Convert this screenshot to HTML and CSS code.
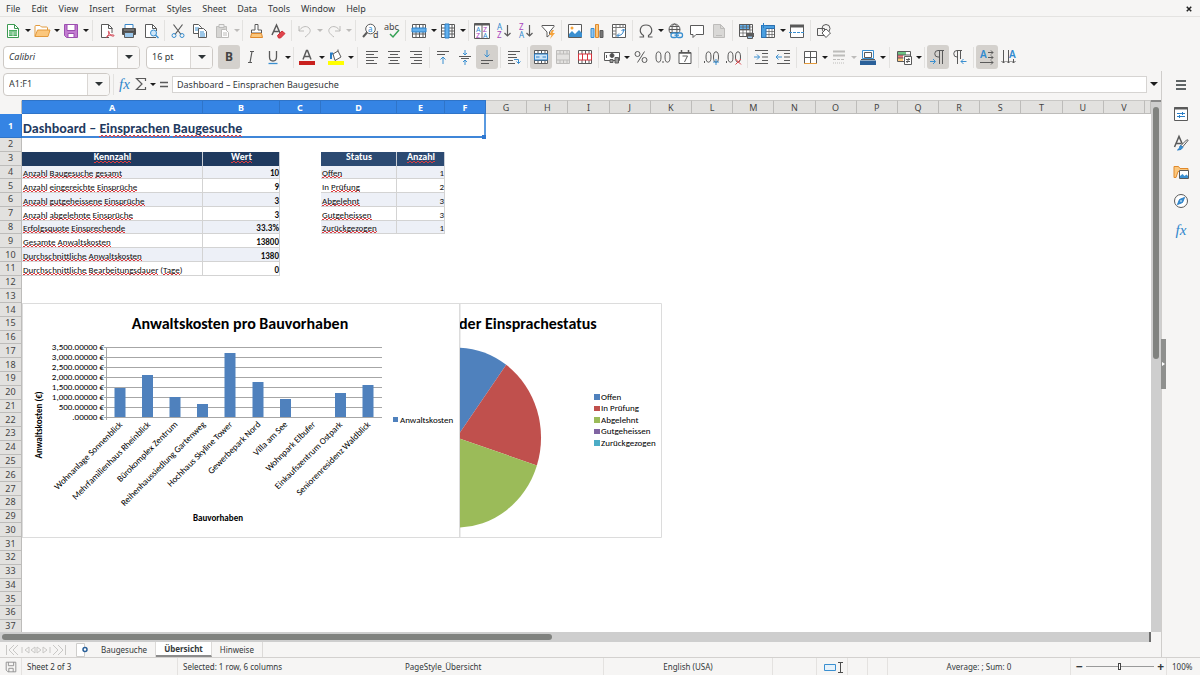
FILE: index.html
```html
<!DOCTYPE html>
<html lang="de">
<head>
<meta charset="utf-8">
<title>Einsprachen Baugesuche</title>
<link rel="stylesheet" href="styles.css">
</head>
<body>
<div class="app">
<nav class="menubar" aria-label="Menu">
<button>File</button><button>Edit</button><button>View</button><button>Insert</button><button>Format</button><button>Styles</button><button>Sheet</button><button>Data</button><button>Tools</button><button>Window</button><button>Help</button>
<button class="close" aria-label="Close document"><svg class="ic" viewBox="0 0 16 16"><path d="M5 5l6 6M11 5l-6 6" stroke-width="2"/></svg></button>
</nav>

<div class="toolbar" role="toolbar" aria-label="Standard">
<button class="tb" aria-label="New"><svg class="ic" viewBox="0 0 16 16"><path d="M2.500 1.500h7l4 4v9h-11z" fill="#fff" stroke="#3c9a52"/><path d="M9.500 1.500v4h4" stroke="#3c9a52"/><path d="M4 7h8v6H4z" fill="#4cae62" stroke="none"/><path d="M4 9h8M4 11h8M8 9v4" stroke="#fff" stroke-width=".6"/></svg></button><button class="dd" aria-label="New options"></button>
<button class="tb" aria-label="Open"><svg class="ic" viewBox="0 0 16 16"><path d="M1 13.500V3.500q0-1 1-1h4l1.500 1.500h5q1 0 1 1v2" fill="#fff" stroke="#e39a3c"/><path d="M1 13.500l2.500-6.500h12.500l-2 6.500z" fill="#fbc77d" stroke="#e39a3c"/></svg></button><button class="dd" aria-label="Open options"></button>
<button class="tb" aria-label="Save"><svg class="ic" viewBox="0 0 16 16"><path d="M1.500 1.500h13v13h-11l-2-2z" fill="#c27bd0" stroke="#9c4fb0"/><path d="M4 1.500h8v6H4z" fill="#fff" stroke="#9c4fb0"/><path d="M5 10.500h6v4H5z" fill="#fff" stroke="#9c4fb0"/></svg></button><button class="dd" aria-label="Save options"></button>
<i class="sep wide"></i>
<button class="tb" aria-label="Export as PDF"><svg class="ic" viewBox="0 0 16 16"><path d="M10 14.500H2.500v-13h7l3.500 3.500v5" fill="#fff"/><path d="M9.500 1.500v4h4"/><path d="M7 14.500c2-1 4-5 3-6s-1 1 1 3 4 2 4 1-4-1-7 1" stroke="#d23b4b"/></svg></button>
<button class="tb" aria-label="Print"><svg class="ic" viewBox="0 0 16 16"><path d="M4 5V1.500h8V5" fill="#fff" stroke="#3a87c8"/><rect x="1" y="5" width="14" height="7" rx="1" fill="#4d4d4d" stroke="none"/><path d="M3.500 9.500h9v5h-9z" fill="#9cc8ec"/><path d="M3 7h10" stroke="#999"/></svg></button>
<button class="tb" aria-label="Print preview"><svg class="ic" viewBox="0 0 16 16"><path d="M13 14.500H2.500v-13h7l4 4V8" fill="#fff"/><path d="M9.500 1.500v4h4"/><g stroke="#3a8fd0"><circle cx="10.500" cy="10" r="3" fill="#cfe6f8"/><path d="M12.500 12l3 3" stroke-width="1.500"/></g></svg></button>
<i class="sep"></i>
<button class="tb" aria-label="Cut"><svg class="ic" viewBox="0 0 16 16"><path d="M3.500 1.500l7.500 10M12.500 1.500L5 11.500" stroke-width="1.200"/><g stroke="#3a8fd0"><circle cx="4" cy="12.500" r="2"/><circle cx="12" cy="12.500" r="2"/></g></svg></button>
<button class="tb" aria-label="Copy"><svg class="ic" viewBox="0 0 16 16"><path d="M1.500 1.500h5l3 3v6h-8z" fill="#fff"/><path d="M3 5h4M3 7h4" stroke="#3a8fd0"/><path d="M6.500 5.500h5l3 3v6h-8z" fill="#fff"/><path d="M8 9h4M8 11h5M8 13h5" stroke="#3a8fd0"/></svg></button>
<button class="tb off" aria-label="Paste"><svg class="ic" viewBox="0 0 16 16"><path d="M2.500 3.500h10v11h-10z" fill="#d6d5d3"/><path d="M5 1.500h5v3H5z" fill="#eee"/><path d="M7.500 6.500h4l3 3v5h-7z" fill="#fff"/><path d="M9 10h4M9 12h4"/></svg></button><button class="dd off" aria-label="Paste options"></button>
<i class="sep"></i>
<button class="tb" aria-label="Clone formatting"><svg class="ic" viewBox="0 0 16 16"><path d="M7 1.500h3V7h3.500v3h-10V7H7z" fill="#fff"/><path d="M3.500 10.500h10l1 4h-12z" fill="#fbc77d" stroke="#e0892b"/></svg></button>
<button class="tb" aria-label="Clear formatting"><svg class="ic" viewBox="0 0 16 16"><path d="M2 12L6.500 2l3.500 8M3.500 8.500h5" stroke-width="1.500"/><path d="M7.500 12.500L12 8l3 2.500-4.500 4.500h-2z" fill="#e0444c" stroke="#cf3038"/></svg></button>
<i class="sep"></i>
<button class="tb off" aria-label="Undo"><svg class="ic" viewBox="0 0 16 16"><path d="M2 3v5h5M2 8c2-4 7-6 10-3s0 6-4 9"/></svg></button><button class="dd off" aria-label="Undo options"></button>
<button class="tb off" aria-label="Redo"><svg class="ic" viewBox="0 0 16 16"><path d="M14 3v5H9M14 8C12 4 7 2 4 5s0 6 4 9"/></svg></button><button class="dd off" aria-label="Redo options"></button>
<i class="sep wide"></i>
<button class="tb" aria-label="Find and replace"><svg class="ic" viewBox="0 0 16 16"><circle cx="8.500" cy="6" r="4.800" fill="#fff"/><path d="M5 9.500L1 14" stroke-width="2"/><text x="6" y="9" font-size="8" class="tblue">a</text><text x="11" y="15" font-size="9" class="tk">d</text></svg></button>
<button class="tb" aria-label="Spelling"><svg class="ic" viewBox="0 0 16 16"><text x="0" y="7" font-size="9" class="tk">abc</text><path d="M6 11l3 3 6-7" stroke="#35a155" stroke-width="1.500"/></svg></button>
<i class="sep"></i>
<button class="tb" aria-label="Row"><svg class="ic" viewBox="0 0 16 16"><path d="M1.500 1.500h13v13h-13z" fill="#fff"/><path d="M1.500 11h13M5 1.500v13M8.500 1.500v13M12 1.500v13"/><path d="M1 5h14v4H1z" fill="#63b1ee" stroke="#2a7ec6"/></svg></button><button class="dd" aria-label="Row options"></button>
<button class="tb" aria-label="Column"><svg class="ic" viewBox="0 0 16 16"><path d="M1.500 1.500h13v13h-13z" fill="#fff"/><path d="M1.500 5h13M1.500 8h13M1.500 11h13M12 1.500v13"/><path d="M5 1h4v14H5z" fill="#63b1ee" stroke="#2a7ec6"/></svg></button><button class="dd" aria-label="Column options"></button>
<i class="sep"></i>
<button class="tb" aria-label="Sort"><svg class="ic" viewBox="0 0 16 16"><path d="M.500.500h15v15H.500zM8 2v13.500" fill="#fff"/><path d="M.500 1.500h15" stroke-width="2"/><text x="2" y="9" font-size="7" class="tblue">A</text><text x="2" y="15" font-size="7" class="tpur">Z</text><text x="9" y="9" font-size="7" class="tpur">Z</text><text x="9" y="15" font-size="7" class="tblue">A</text></svg></button>
<button class="tb" aria-label="Sort ascending"><svg class="ic" viewBox="0 0 16 16"><text x="1" y="7" font-size="8" class="tblue">A</text><text x="1" y="15" font-size="8" class="tpur">Z</text><path d="M11.500 2v11M8.500 10l3 3 3-3" stroke-width="1.200"/></svg></button>
<button class="tb" aria-label="Sort descending"><svg class="ic" viewBox="0 0 16 16"><text x="1" y="7" font-size="8" class="tpur">Z</text><text x="1" y="15" font-size="8" class="tblue">A</text><path d="M11.500 2v11M8.500 10l3 3 3-3" stroke-width="1.200"/></svg></button>
<button class="tb" aria-label="AutoFilter"><svg class="ic" viewBox="0 0 16 16"><path d="M2 2.500h12v1L9.500 9v3L7 14V9L2 3.500z" fill="#fff"/><path d="M12 7l-3 5h2.500l-1.500 4 5-6h-2.500l1.500-3z" fill="#f5a33c" stroke="none"/></svg></button>
<i class="sep"></i>
<button class="tb" aria-label="Insert image"><svg class="ic" viewBox="0 0 16 16"><path d="M1.500 1.500h13v13h-13z" fill="#fff"/><circle cx="5" cy="5" r="1.500" fill="#f5a33c" stroke="none"/><path d="M2 14v-3l3-3 3 3 4-4 3 3v4z" fill="#3a8fd0" stroke="none"/></svg></button>
<button class="tb" aria-label="Insert chart"><svg class="ic" viewBox="0 0 16 16"><path d="M2 5.500h3v9H2z" fill="#8cc4f2" stroke="#3a8fd0"/><path d="M6.500 1.500h3v13h-3z" fill="#fbc77d" stroke="#e0892b"/><path d="M11 7.500h3v7h-3z" fill="#777"/></svg></button>
<button class="tb" aria-label="Pivot table"><svg class="ic" viewBox="0 0 16 16"><path d="M1.500 1.500h13v13h-13z" fill="#fff"/><path d="M1.500 4.500h13M5 1.500v13M9 1.500v3M12 1.500v3M1.500 8H5M1.500 11H5" stroke="#777"/><path d="M6.500 12.500c4 0 6-2 6-6M8 10.500l-2 2 2 2M10.500 8l2-2 2 2" stroke="#2a7ec6"/></svg></button>
<i class="sep"></i>
<button class="tb" aria-label="Special character"><svg class="ic" viewBox="0 0 16 16"><path d="M1.500 14h4v-1.500C0 9 2 2 8 2s8 7 2.500 10.500V14h4" stroke-width="1.200"/></svg></button><button class="dd" aria-label="Special character options"></button>
<button class="tb" aria-label="Hyperlink"><svg class="ic" viewBox="0 0 16 16"><circle cx="7.500" cy="6.500" r="5.500"/><ellipse cx="7.500" cy="6.500" rx="2.500" ry="5.500"/><path d="M2 6.500h11M3 3.500h9M3 9.500h9"/><g stroke="#3a8fd0" stroke-width="1.300" fill="#f6f5f4"><rect x="4" y="10" width="6" height="4.500" rx="2"/><rect x="9.500" y="10" width="6" height="4.500" rx="2"/><path d="M7.500 12.200h4.500"/></g></svg></button>
<button class="tb" aria-label="Comment"><svg class="ic" viewBox="0 0 16 16"><path d="M1.500 2.500h13v9H7l-3 3v-3H1.500z" fill="#fff"/></svg></button>
<button class="tb off" aria-label="Headers and footers"><svg class="ic" viewBox="0 0 16 16"><path d="M2.500 1.500h7l4 4v9h-11z" fill="#d9d8d6"/><path d="M9.500 1.500v4h4M5 12.500h6"/></svg></button>
<i class="sep"></i>
<button class="tb" aria-label="Define print area"><svg class="ic" viewBox="0 0 16 16"><path d="M1.500 1.500h13v12h-13z" fill="#fff"/><path d="M1.500 1.500h10v5h-10z" fill="#63b1ee"/><path d="M1.500 4h13M1.500 7h13M1.500 10h13M5 1.500v12M8.500 1.500v12M12 1.500v9" stroke-width=".7"/><path d="M8 10h8v4H8z" fill="#5d5d5d" stroke="none"/><path d="M9.500 13h5v2.500h-5z" fill="#9cc8ec"/></svg></button>
<button class="tb" aria-label="Freeze rows and columns"><svg class="ic" viewBox="0 0 16 16"><path d="M1.500 2.500h13v12h-13z" fill="#fff"/><path d="M6 8.500h8.500M6 11.500h8.500M9 2.500v12M12 2.500v12" stroke-width=".7"/><path d="M1.500 2.500h13v3H6v9H1.500z" fill="#4a9fe0" stroke="#2a6fb0"/><path d="M3.500 0v5M1 2.500h5" stroke="#2a7ec6"/></svg></button><button class="dd" aria-label="Freeze options"></button>
<button class="tb" aria-label="Split window"><svg class="ic" viewBox="0 0 16 16"><path d="M1.500 2.500h13v12h-13z" fill="#fff"/><path d="M1 3h14" stroke-width="3"/><path d="M0 9.500h16" stroke="#3a8fd0" stroke-dasharray="3 1"/></svg></button>
<i class="sep"></i>
<button class="tb" aria-label="Draw functions"><svg class="ic" viewBox="0 0 16 16"><path d="M1.500 5.500h7v7h-7z"/><circle cx="10" cy="5.500" r="4"/><path d="M10 6l4.500 4-4.500 4.500L6 10z" fill="#fff"/></svg></button>
</div>

<div class="toolbar second" role="toolbar" aria-label="Formatting">
<div class="combo font"><input aria-label="Font name" value="Calibri"><button aria-label="Font list"></button></div>
<div class="combo size"><input aria-label="Font size" value="16 pt"><button aria-label="Size list"></button></div>
<button class="tb on" aria-label="Bold"><svg class="ic" viewBox="0 0 16 16"><text x="4" y="12" font-size="12" font-weight="700" class="tk">B</text></svg></button>
<button class="tb" aria-label="Italic"><svg class="ic" viewBox="0 0 16 16"><path d="M7 2.500h4M5 13.500h4M9 2.500l-2 11" stroke-width="1.200"/></svg></button>
<button class="tb" aria-label="Underline"><svg class="ic" viewBox="0 0 16 16"><path d="M4.500 2v6q0 4 3.500 4t3.500-4V2" stroke-width="1.300"/><path d="M3.500 14.500h9" stroke="#3a8fd0" stroke-width="1.300"/></svg></button><button class="dd" aria-label="Underline options"></button>
<i class="sep"></i>
<button class="tb" aria-label="Font color"><svg class="ic" viewBox="0 0 16 16"><path d="M4 10.500L7.500 1.500h1l3.500 9M5 7.500h6" stroke-width="1.500"/><path d="M0 12h16v4H0z" fill="#c9211e" stroke="none"/></svg></button><button class="dd" aria-label="Font color options"></button>
<button class="tb" aria-label="Background color"><svg class="ic" viewBox="0 0 16 16"><path d="M5 5l5-3 3 6-6 3.500zM10 2V0.500" fill="#fff"/><path d="M3 10V4.500h2" stroke="#2a7ec6" stroke-width="2"/><path d="M0 12h16v4H0z" fill="#ffff00" stroke="none"/></svg></button><button class="dd" aria-label="Background color options"></button>
<i class="sep wide"></i>
<button class="tb" aria-label="Align left"><svg class="ic" viewBox="0 0 16 16"><path d="M2 2.500h12M2 5.500h8M2 8.500h12M2 11.500h8M2 14.500h11"/></svg></button>
<button class="tb" aria-label="Center"><svg class="ic" viewBox="0 0 16 16"><path d="M2 2.500h12M4 5.500h8M2 8.500h12M4 11.500h8M2.500 14.500h11"/></svg></button>
<button class="tb" aria-label="Align right"><svg class="ic" viewBox="0 0 16 16"><path d="M2 2.500h12M6 5.500h8M2 8.500h12M6 11.500h8M3 14.500h11"/></svg></button>
<i class="sep"></i>
<button class="tb" aria-label="Align top"><svg class="ic" viewBox="0 0 16 16"><path d="M2 2.500h12M2 5.500h8"/><path d="M8 15V8M5.500 10.500L8 8l2.500 2.500" stroke="#3a8fd0"/></svg></button>
<button class="tb" aria-label="Center vertically"><svg class="ic" viewBox="0 0 16 16"><path d="M2 7.500h12M4 9.500h8"/><path d="M8 1v5M6 4l2 2 2-2M8 16v-5M6 13l2-2 2 2" stroke="#3a8fd0"/></svg></button>
<button class="tb on" aria-label="Align bottom"><svg class="ic" viewBox="0 0 16 16"><path d="M2 11.500h12M2 14.500h8"/><path d="M8 1v7M5.500 5.500L8 8l2.500-2.500" stroke="#3a8fd0"/></svg></button>
<i class="sep"></i>
<button class="tb" aria-label="Wrap text"><svg class="ic" viewBox="0 0 16 16"><path d="M2 2.500h12M2 5.500h8M2 8.500h9M2 11.500h5M2 14.500h7"/><path d="M8 10.500h4.500v4M10.500 12.500l2 2 2-2" stroke="#3a8fd0"/></svg></button>
<i class="sep"></i>
<button class="tb on" aria-label="Merge and center"><svg class="ic" viewBox="0 0 16 16"><path d="M1.500 1.500h13v13h-13z" fill="#fff"/><path d="M1.500 4.500h13M1.500 11.500h13M5 1.500v3M8.500 1.500v3M12 1.500v3M5 11.500v3M8.500 11.500v3M12 11.500v3"/><path d="M1.500 5h13v6h-13zM3 8h3.500M13 8H9.500" stroke="#2a7ec6" fill="#cfe6f8"/></svg></button>
<button class="tb off" aria-label="Merge cells"><svg class="ic" viewBox="0 0 16 16"><path d="M1.500 1.500h13v13h-13zM1.500 5h13M1.500 11h13M5 1.500V5M8.500 1.500V5M12 1.500V5M5 11v3.500M8.500 11v3.500M12 11v3.500" fill="#e3e2e0"/></svg></button>
<button class="tb" aria-label="Unmerge cells"><svg class="ic" viewBox="0 0 16 16"><path d="M1.500 1.500h13v13h-13zM5 1.500V5M8.500 1.500V5M12 1.500V5M5 11v3.500M8.500 11v3.500M12 11v3.500" fill="#fff"/><path d="M1.500 5h13v6h-13zM5.500 5v6M10.500 5v6" stroke="#d8323c"/></svg></button>
<i class="sep"></i>
<button class="tb" aria-label="Currency"><svg class="ic" viewBox="0 0 16 16"><path d="M.500 3.500h15v8H.500z" fill="#fff"/><circle cx="8" cy="6.500" r="2" fill="#4d4d4d"/><path d="M6 10.500h3v3H6zM11 8.500h3.500v5.500H11z" fill="#999"/><path d="M2.500 6v3"/></svg></button><button class="dd" aria-label="Currency options"></button>
<button class="tb" aria-label="Percent"><svg class="ic" viewBox="0 0 16 16"><circle cx="4.500" cy="5" r="2.500"/><circle cx="11.500" cy="11" r="2.500"/><path d="M11.500 2.500l-7 11"/></svg></button>
<button class="tb" aria-label="Number"><svg class="ic" viewBox="0 0 16 16"><ellipse cx="3.500" cy="8" rx="2.500" ry="5.200"/><ellipse cx="12.500" cy="8" rx="2.500" ry="5.200"/><path d="M8 12v2"/></svg></button>
<button class="tb" aria-label="Date"><svg class="ic" viewBox="0 0 16 16"><path d="M2 3.500h12v11H2z" fill="#fff"/><path d="M2 4h12M4.500 1v3M11.500 1v3" stroke-width="1.500"/><path d="M5.500 7h5l-3 6"/></svg></button>
<i class="sep"></i>
<button class="tb" aria-label="Add decimal place"><svg class="ic" viewBox="0 0 16 16"><path d="M.500 12v2"/><ellipse cx="4.500" cy="8" rx="2.500" ry="5.200"/><ellipse cx="12" cy="8" rx="2.500" ry="5.200"/><path d="M9 13h6M12 10v6" stroke="#3a8fd0"/></svg></button>
<button class="tb" aria-label="Delete decimal place"><svg class="ic" viewBox="0 0 16 16"><path d="M.500 12v2"/><ellipse cx="4.500" cy="8" rx="2.500" ry="5.200"/><ellipse cx="12" cy="8" rx="2.500" ry="5.200"/><path d="M9.500 10l5.500 5.500M15 10l-5.500 5.500" stroke="#e0444c"/></svg></button>
<i class="sep"></i>
<button class="tb" aria-label="Increase indent"><svg class="ic" viewBox="0 0 16 16"><path d="M2 1.500h13M9 4.500h6M9 8h6M9 11.500h6M2 14.500h13"/><path d="M1 8h5.500M4 5.500L6.500 8 4 10.500" stroke="#3a8fd0"/></svg></button>
<button class="tb" aria-label="Decrease indent"><svg class="ic" viewBox="0 0 16 16"><path d="M2 1.500h13M9 4.500h6M9 8h6M9 11.500h6M2 14.500h13"/><path d="M7 8H1M3.500 5.500L1 8l2.500 2.500" stroke="#3a8fd0"/></svg></button>
<i class="sep"></i>
<button class="tb" aria-label="Borders"><svg class="ic" viewBox="0 0 16 16"><path d="M2.500 2.500h12v12h-12zM8.500 2.500v12M2.500 8.500h12" fill="#fff"/><path d="M2 14.500h13" stroke="#e39a3c"/></svg></button><button class="dd" aria-label="Border options"></button>
<button class="tb off" aria-label="Border style"><svg class="ic" viewBox="0 0 16 16"><path d="M2 2.500h12" stroke-width="2"/><path d="M2 6.500h12" stroke-width="2"/><path d="M2 10.500h12" stroke-dasharray="3 1"/><path d="M2 14h12" stroke-dasharray="1 1"/></svg></button><button class="dd off" aria-label="Border style options"></button>
<button class="tb" aria-label="Border color"><svg class="ic" viewBox="0 0 16 16"><path d="M2.500 1.500h11v8h-11z" fill="#fff" stroke="#3a8fd0"/><path d="M4.500 3.500h7v5h-7zM1 10.500h14"/><path d="M0 11.500h16V16H0z" fill="#2a6099" stroke="none"/></svg></button><button class="dd" aria-label="Border color options"></button>
<i class="sep wide"></i>
<button class="tb" aria-label="Conditional formatting"><svg class="ic" viewBox="0 0 16 16"><path d="M1.500 2.500h13v10h-13z" fill="#fff"/><path d="M2 3h8v3H2z" fill="#6cc283" stroke="none"/><path d="M2 6h5v3H2z" fill="#f2777d" stroke="none"/><path d="M2 9h5v3H2z" fill="#fbc77d" stroke="none"/><path d="M1.500 6h13M1.500 9h6"/><path d="M8.500 7.500h7v8h-7z" fill="#fff"/><path d="M10 10.500h4M10 12.500h4M13 9l-2 5"/></svg></button><button class="dd" aria-label="Conditional options"></button>
<i class="sep"></i>
<button class="tb on" aria-label="Left to right"><svg class="ic" viewBox="0 0 16 16"><path d="M9.500 15V1.500M12.500 15V1.500M14 1.500H8a3 3 0 0 0 0 6.500h1"/><path d="M0 12.500h5M3 10l2.500 2.500L3 15" stroke="#3a8fd0"/></svg></button>
<button class="tb" aria-label="Right to left"><svg class="ic" viewBox="0 0 16 16"><path d="M5.500 15V1.500M8.500 10V1.500M10 1.500H5a3 3 0 0 0 0 6.500h.500"/><path d="M14.500 12.500H9M11.500 10L9 12.500l2.500 2.500" stroke="#3a8fd0"/></svg></button>
<i class="sep"></i>
<button class="tb on" aria-label="Horizontal text"><svg class="ic" viewBox="0 0 16 16"><text x="1" y="9" font-size="10" font-weight="600" class="tblue">A</text><path d="M9 3.500h5M12 1.500l2 2-2 2M9 8.500h5M12 6.500l2 2-2 2M1 13.500h13M12 11.500l2 2-2 2"/></svg></button>
<button class="tb" aria-label="Vertical text"><svg class="ic" viewBox="0 0 16 16"><text x="8" y="9" font-size="10" font-weight="600" class="tblue">A</text><path d="M2.500 1v13M.500 12l2 2 2-2M7.500 1v13M5.500 12l2 2 2-2M12.500 10v4M10.500 12l2 2 2-2"/></svg></button>
</div>

<div class="main">
<div class="work">
<div class="formula">
<div class="combo name"><input aria-label="Name box" value="A1:F1"><button aria-label="Named ranges"></button></div>
<i class="sep"></i>
<button class="tb fx" aria-label="Function wizard">fx</button>
<button class="tb slim" aria-label="Sum"><svg class="ic" viewBox="0 0 16 16"><path d="M12.500 5V2.500h-9L9 8l-5.500 5.500h9V11" stroke-width="1.200"/></svg></button><button class="dd" aria-label="Sum options"></button>
<button class="tb slim" aria-label="Formula"><svg class="ic" viewBox="0 0 16 16"><path d="M4 6.500h8M4 10.500h8" stroke-width="1.600"/></svg></button>
<input class="line" aria-label="Input line" value="Dashboard – Einsprachen Baugesuche">
<button class="dd big" aria-label="Expand formula bar"></button>
</div>

<div class="area">
<div class="sheet">
<table class="grid">
<colgroup><col class="c0"><col class="ca"><col class="cb"><col class="cc"><col class="cd"><col class="ce"><col class="cc"><col span="16"><col class="cw"></colgroup>
<tr class="heads"><th class="corner"></th><th class="sel">A</th><th class="sel">B</th><th class="sel">C</th><th class="sel">D</th><th class="sel">E</th><th class="sel">F</th><th>G</th><th>H</th><th>I</th><th>J</th><th>K</th><th>L</th><th>M</th><th>N</th><th>O</th><th>P</th><th>Q</th><th>R</th><th>S</th><th>T</th><th>U</th><th>V</th><th></th></tr>
<tr class="first"><th class="sel">1</th><td class="title" colspan="6">Dashboard – <span class="sp">Einsprachen</span> <span class="sp">Baugesuche</span><i class="handle"></i></td><td colspan="17"></td></tr>
<tr><th>2</th><td colspan="23"></td></tr>
<tr><th>3</th><td class="h1"><span class="sp">Kennzahl</span></td><td class="h1"><span class="sp">Wert</span></td><td></td><td class="h2">Status</td><td class="h2"><span class="sp">Anzahl</span></td><td colspan="18"></td></tr>
<tr class="odd"><th>4</th><td class="d"><span class="sp">Anzahl</span> <span class="sp">Baugesuche</span> <span class="sp">gesamt</span></td><td class="d n b">10</td><td></td><td class="d"><span class="sp">Offen</span></td><td class="d n">1</td><td colspan="18"></td></tr>
<tr><th>5</th><td class="d"><span class="sp">Anzahl</span> <span class="sp">eingereichte</span> <span class="sp">Einsprüche</span></td><td class="d n b">9</td><td></td><td class="d">In <span class="sp">Prüfung</span></td><td class="d n">2</td><td colspan="18"></td></tr>
<tr class="odd"><th>6</th><td class="d"><span class="sp">Anzahl</span> <span class="sp">gutgeheissene</span> <span class="sp">Einsprüche</span></td><td class="d n b">3</td><td></td><td class="d"><span class="sp">Abgelehnt</span></td><td class="d n">3</td><td colspan="18"></td></tr>
<tr><th>7</th><td class="d"><span class="sp">Anzahl</span> <span class="sp">abgelehnte</span> <span class="sp">Einsprüche</span></td><td class="d n b">3</td><td></td><td class="d"><span class="sp">Gutgeheissen</span></td><td class="d n">3</td><td colspan="18"></td></tr>
<tr class="odd"><th>8</th><td class="d"><span class="sp">Erfolgsquote</span> <span class="sp">Einsprechende</span></td><td class="d n b">33.3%</td><td></td><td class="d"><span class="sp">Zurückgezogen</span></td><td class="d n">1</td><td colspan="18"></td></tr>
<tr><th>9</th><td class="d"><span class="sp">Gesamte</span> <span class="sp">Anwaltskosten</span></td><td class="d n b">13800</td><td colspan="21"></td></tr>
<tr class="odd"><th>10</th><td class="d"><span class="sp">Durchschnittliche</span> <span class="sp">Anwaltskosten</span></td><td class="d n b">1380</td><td colspan="21"></td></tr>
<tr><th>11</th><td class="d"><span class="sp">Durchschnittliche</span> <span class="sp">Bearbeitungsdauer</span> (<span class="sp">Tage</span>)</td><td class="d n b">0</td><td colspan="21"></td></tr>
<tr><th>12</th><td colspan="23"></td></tr>
<tr><th>13</th><td colspan="23"></td></tr>
<tr><th>14</th><td colspan="23"></td></tr>
<tr><th>15</th><td colspan="23"></td></tr>
<tr><th>16</th><td colspan="23"></td></tr>
<tr><th>17</th><td colspan="23"></td></tr>
<tr><th>18</th><td colspan="23"></td></tr>
<tr><th>19</th><td colspan="23"></td></tr>
<tr><th>20</th><td colspan="23"></td></tr>
<tr><th>21</th><td colspan="23"></td></tr>
<tr><th>22</th><td colspan="23"></td></tr>
<tr><th>23</th><td colspan="23"></td></tr>
<tr><th>24</th><td colspan="23"></td></tr>
<tr><th>25</th><td colspan="23"></td></tr>
<tr><th>26</th><td colspan="23"></td></tr>
<tr><th>27</th><td colspan="23"></td></tr>
<tr><th>28</th><td colspan="23"></td></tr>
<tr><th>29</th><td colspan="23"></td></tr>
<tr><th>30</th><td colspan="23"></td></tr>
<tr><th>31</th><td colspan="23"></td></tr>
<tr><th>32</th><td colspan="23"></td></tr>
<tr><th>33</th><td colspan="23"></td></tr>
<tr><th>34</th><td colspan="23"></td></tr>
<tr><th>35</th><td colspan="23"></td></tr>
<tr><th>36</th><td colspan="23"></td></tr>
<tr><th>37</th><td colspan="23"></td></tr>
</table>
<div class="charts">
<svg class="chart" width="438" height="235" viewBox="22 303 438 235" role="img" aria-label="Anwaltskosten pro Bauvorhaben">
<rect x="22.500" y="303.500" width="437" height="234" fill="#fff" stroke="#dcdcdc"/>
<text class="ct" x="240" y="329" text-anchor="middle">Anwaltskosten pro Bauvorhaben</text>
<path d="M104 347.500h278M104 357.500h278M104 367.500h278M104 377.500h278M104 387.500h278M104 397.500h278M104 407.500h278M104 417.500h278M106.500 347v73" stroke="#a6a6a6"/>
<g fill="#4f81bd"><path d="M114.500 388h11v29h-11zM142 375h11v42h-11zM169.500 397h11v20h-11zM197 404h11v13h-11zM224.500 353h11v64h-11zM252.500 382h11v35h-11zM280 399h11v18h-11zM335 393h11v24h-11zM362.500 385h11v32h-11z"/></g>
<g class="cl" text-anchor="end"><text x="104" y="350">3,500.00000 €</text><text x="104" y="360">3,000.00000 €</text><text x="104" y="370">2,500.00000 €</text><text x="104" y="380">2,000.00000 €</text><text x="104" y="390">1,500.00000 €</text><text x="104" y="400">1,000.00000 €</text><text x="104" y="410">500.00000 €</text><text x="104" y="420">.00000 €</text></g>
<g class="cl" text-anchor="end"><text transform="translate(123 425) rotate(-45)">Wohnanlage Sonnenblick</text><text transform="translate(151 425) rotate(-45)">Mehrfamilienhaus Rheinblick</text><text transform="translate(178 425) rotate(-45)">Bürokomplex Zentrum</text><text transform="translate(206 425) rotate(-45)">Reihenhaussiedlung Gartenweg</text><text transform="translate(233 425) rotate(-45)">Hochhaus Skyline Tower</text><text transform="translate(261 425) rotate(-45)">Gewerbepark Nord</text><text transform="translate(288 425) rotate(-45)">Villa am See</text><text transform="translate(316 425) rotate(-45)">Wohnpark Elbufer</text><text transform="translate(343 425) rotate(-45)">Einkaufszentrum Ostpark</text><text transform="translate(371 425) rotate(-45)">Seniorenresidenz Waldblick</text></g>
<text class="cb2" transform="translate(42 425) rotate(-90)" text-anchor="middle">Anwaltskosten (€)</text>
<text class="cb2" x="218" y="521" text-anchor="middle">Bauvorhaben</text>
<path d="M393 417h5v5h-5z" fill="#4f81bd"/><text class="cl" x="400" y="423">Anwaltskosten</text>
</svg>
<svg class="chart" width="202" height="235" viewBox="460 303 202 235" role="img" aria-label="Einsprachestatus">
<path d="M460 303.500h201.500v234H460z" fill="#fff" stroke="#dcdcdc"/>
<text class="ct" x="459" y="329">der Einsprachestatus</text>
<path d="M456.500 437.600V347.600A84.500 90 0 0 1 506.200 364.800z" fill="#4f81bd"/>
<path d="M456.500 437.600L506.200 364.800A84.500 90 0 0 1 536.900 465.400z" fill="#c0504d"/>
<path d="M456.500 437.600L536.900 465.400A84.500 90 0 0 1 456.500 527.600z" fill="#9bbb59"/>
<path d="M594 394h6v6h-6z" fill="#4f81bd"/><path d="M594 406h6v5h-6z" fill="#c0504d"/><path d="M594 417h6v6h-6z" fill="#9bbb59"/><path d="M594 429h6v5h-6z" fill="#8064a2"/><path d="M594 440h6v6h-6z" fill="#4bacc6"/>
<g class="cl"><text x="601" y="400">Offen</text><text x="601" y="411">In Prüfung</text><text x="601" y="423">Abgelehnt</text><text x="601" y="434">Gutgeheissen</text><text x="601" y="446">Zurückgezogen</text></g>
</svg>
</div>
</div>
<div class="vscroll"><i></i></div>
</div>
<div class="hscroll"><i></i></div>
<div class="tabs">
<button class="nav" aria-label="Sheet navigation"><svg viewBox="0 0 62 12" width="62" height="12"><path d="M1.500 1v10M9 1L4 6l5 5M13 1L8 6l5 5M17 3v6M24 3l-4 3 4 3zM30 3l-4 3 4 3zM32 3l4 3-4 3zM38 3l4 3-4 3zM45 3v6M48 1l5 5-5 5M53 1l5 5-5 5M60.500 1v10" fill="none" stroke="#c9c8c6"/></svg></button>
<button class="add" aria-label="Add sheet"><svg viewBox="0 0 14 14" width="14" height="14"><path d="M1.500.500h8v13h-8z" fill="#fff" stroke="#cfcecc"/><circle cx="10" cy="6.500" r="2" fill="#fff" stroke="#2a6099" stroke-width="1.500"/></svg></button>
<button class="tab">Baugesuche</button><button class="tab act">Übersicht</button><button class="tab">Hinweise</button>
</div>
</div>
<aside class="side">
<button class="tb" aria-label="Sidebar settings"><svg class="ic" viewBox="0 0 16 16"><path d="M3 4h10M3 8h10M3 12h10" stroke="#2e3436" stroke-width="1.600"/></svg></button>
<button class="tb" aria-label="Properties"><svg class="ic" viewBox="0 0 16 16"><path d="M1.500 1.500h13v13h-13z" fill="#fff"/><path d="M1 2.500h14" stroke-width="2"/><path d="M4 7.500h8M4 10.500h8M9.500 6v3M6.500 9v3" stroke="#2a7ec6"/></svg></button>
<button class="tb" aria-label="Styles"><svg class="ic" viewBox="0 0 16 16"><path d="M1.500 12L6 1.500l3.500 8M3 8.500h5" stroke-width="1.500"/><path d="M15 5.500L9.500 12 8 10.500 13.500 5q2-.5 1.500.500z" fill="#fff"/><path d="M8 10.500l1.800 1.800q-1 3-5.300 2.700 2-1 2-2.500t1.500-2z" fill="#3a8fd0" stroke="#2a7ec6"/></svg></button>
<button class="tb" aria-label="Gallery"><svg class="ic" viewBox="0 0 16 16"><path d="M1 13.500v-11h4.500l1.500 2h8v3H5l-2 6z" fill="#fbc77d" stroke="#e0892b"/><path d="M6.500 6.500h9v8h-9z" fill="#fff"/><path d="M7 14v-2l2.500-2 2 2 2-1.500L15 12v2z" fill="#3a8fd0" stroke="none"/></svg></button>
<button class="tb" aria-label="Navigator"><svg class="ic" viewBox="0 0 16 16"><circle cx="8" cy="8" r="6.500" fill="#fff"/><path d="M11.500 4.500L9.500 9.500l-5 2 2-5z" fill="#3a8fd0" stroke="#2a7ec6"/><circle cx="8" cy="8" r=".8" fill="#fff" stroke="none"/></svg></button>
<button class="tb fx" aria-label="Functions">fx</button>
<button class="grip" aria-label="Hide sidebar"></button>
</aside>
</div>

<footer class="status">
<span class="ico"><svg class="ic" viewBox="0 0 16 16"><path d="M2.500 2.500h11v11h-9l-2-2zM5 2.500v4h6v-4M5.500 13.500v-4h5v4" stroke="#8a8a8a"/></svg></span>
<span>Sheet 2 of 3</span><span class="r">Selected: 1 row, 6 columns</span><span>PageStyle_Übersicht</span><span class="mid">English (USA)</span><span></span>
<span class="ico"><svg viewBox="0 0 22 12" width="22" height="12" fill="none"><path d="M3.500 3.500h11v6h-11z" fill="#e6f2fb" stroke="#3a8fd0"/><path d="M17 1.500h5M17 11.500h5M19.500 1.500v10" stroke="#4d4d4d"/></svg></span><span></span><span></span>
<span class="mid">Average: ; Sum: 0</span>
<span class="zoom"><button aria-label="Zoom out">−</button><input type="range" aria-label="Zoom" min="0" max="100" value="49"><button aria-label="Zoom in">+</button></span>
<span class="pct">100%</span>
</footer>
</div>
</body>
</html>
```
FILE: styles.css
```css
* { box-sizing: border-box; }
body { margin: 0; background: #f6f5f4; color: #33383a; font: 9px/12px "Noto Sans", sans-serif; }
button, input { font: inherit; color: inherit; margin: 0; padding: 0; border: 0; background: none; }
.app { display: flex; flex-direction: column; height: 100vh; overflow: hidden; }

.menubar { display: flex; gap: 11px; height: 17px; padding: 1px 5px 0 6px; border-bottom: 1px solid #e4e3e1; flex: none; }
.menubar .close { margin-left: auto; width: 12px; }
.menubar .close .ic { width: 12px; height: 12px; stroke: #222; }

.ic { display: block; overflow: visible; width: 16px; height: 16px; fill: none; stroke: #5a5a5a; font-family: "Noto Sans", sans-serif; }
.ic text { stroke: none; }
.tk { fill: #444; }
.tblue { fill: #2f8ad0; }
.tpur { fill: #a944bd; }

.toolbar { display: flex; align-items: center; height: 27px; padding-left: 2px; flex: none; }
.toolbar.second { padding-bottom: 1px; }
.tb { display: grid; place-items: center; width: 22px; height: 24px; border-radius: 3px; flex: none; }
.tb.on { background: #d4d1cd; }
.tb.slim { width: 16px; }
.tb.off .ic { stroke: #bdbcba; }
.tb.fx { color: #2f86cc; font: italic 15px/20px "Liberation Serif", serif; }
.dd { display: grid; place-items: center; width: 7px; height: 20px; flex: none; }
.dd::after { content: ""; border: 3px solid transparent; border-top-color: #1c1c1c; border-bottom: 0; }
.dd.off::after { border-top-color: #bdbcba; }
.dd.big { width: 14px; }
.dd.big::after { border-width: 4px 4px 0; }
.sep { width: 1px; height: 21px; margin: 0 2px; background: #e3e2e0; flex: none; }
.sep.wide { margin: 0 3px; }

.combo { display: flex; height: 23px; border: 1px solid #cdc9c5; border-radius: 4px; background: #fff; overflow: hidden; flex: none; }
.combo input { flex: 1; min-width: 0; padding-left: 5px; }
.combo button { display: grid; place-items: center; width: 22px; border-left: 1px solid #dad7d4; background: #f8f7f6; }
.combo button::after { content: ""; border: 4px solid transparent; border-top-color: #2e3436; border-bottom: 0; }
.combo.font { width: 137px; margin: 0 6px 0 1px; font-style: italic; }
.combo.size { width: 67px; margin-right: 5px; }
.combo.name { width: 107px; margin: 0 1px 0 3px; }

.main { display: flex; flex: 1; min-height: 0; }
.work { display: flex; flex-direction: column; flex: 1; min-width: 0; }
.formula { display: flex; align-items: center; height: 29px; padding-bottom: 3px; flex: none; }
.formula .fx { width: 17px; }
.line { flex: 1; height: 17px; padding-left: 4px; border: 1px solid #d6d4d2; background: #fff; }

.area { display: flex; flex: 1; min-height: 0; }
.sheet { position: relative; flex: 1; min-width: 0; overflow: hidden; background: #fff; }
.grid { width: 100%; height: calc(100% + 2px); table-layout: fixed; border-collapse: separate; border-spacing: 0; }
.c0 { width: 22px; }
.ca { width: 181px; }
.cb { width: 77px; }
.cc { width: 41px; }
.cd { width: 76px; }
.ce { width: 48px; }
.cw { width: 6px; }
.grid th, .grid td { padding: 0; line-height: 12px; white-space: nowrap; }
.grid th { background: #e2e1df; border-right: 1px solid #bdbcba; border-bottom: 1px solid #bdbcba; font-weight: 400; color: #444; text-align: center; }
.grid .heads { height: 14px; }
.grid .heads th { border-top: 1px solid #c8c7c5; line-height: 11px; }
.grid .first { height: 24px; }
.grid .heads .corner { background: #f6f5f4; border-top-color: #f6f5f4; border-bottom-color: #f6f5f4; }
.grid th.sel, .grid .heads th.sel { background: #3584e4; border-color: #2f74c8; color: #fff; font-weight: 700; }
.grid td { padding-left: 1px; font-family: Carlito, Calibri, Lato, sans-serif; font-size: 9px; line-height: 10px; color: #111; vertical-align: bottom; }
.grid .title { position: relative; border-right: 2px solid #5a9ae0; border-bottom: 2px solid #3f86d8; color: #1f3a5f; font-size: 14px; font-weight: 700; line-height: 15px; }
.handle { position: absolute; right: -2px; bottom: -3px; width: 4px; height: 4px; background: #2f78d0; }
/* two offset rows of dashes make the spell-check zigzag */
.sp {
  background:
    repeating-linear-gradient(90deg, #dd3b40 0 2px, transparent 2px 4px) 0 100% / 100% 1px no-repeat,
    repeating-linear-gradient(90deg, transparent 0 2px, #dd3b40 2px 4px) 0 calc(100% - 1px) / 100% 1px no-repeat;
}
.grid .h1, .grid .h2 { background: #1f3a5f; color: #fff; font-size: 10px; font-weight: 700; text-align: center; vertical-align: top; border-right: 1px solid #c9ced6; }
.grid .h2 { background: #2c4a72; }
.grid .d { border-right: 1px solid #d3d3d3; border-bottom: 1px solid #d3d3d3; }
.odd .d { background: #edf0f7; }
.grid .n { text-align: right; }
.grid .b { font-weight: 700; }

.charts { position: absolute; left: 22px; top: 203px; display: flex; }
.chart { display: block; font-family: Carlito, Calibri, Lato, sans-serif; fill: #000; }
.ct { font-size: 16px; font-weight: 700; }
.cl { font-size: 9px; }
.cb2 { font-size: 9px; font-weight: 700; }

.vscroll { width: 10px; padding: 5px 2px 0; background: #cecece; border-top: 2px solid #8a8a8a; }
.vscroll i { display: block; width: 6px; height: 48%; border-radius: 3px; background: #80827f; }
.hscroll { height: 10px; padding: 2px 2px; margin-right: 10px; background: #cecece; border-right: 2px solid #6d6d6d; flex: none; }
.hscroll i { display: block; width: 48%; height: 6px; border-radius: 3px; background: #80827f; }
.tabs { display: flex; height: 15px; padding-left: 5px; font-size: 8px; flex: none; }
.nav { width: 62px; }
.nav svg, .add svg { display: block; }
.add { margin: 0 4px 0 8px; }
.tab { padding: 0 8px; border-right: 1px solid #dcdad8; }
.tab.act { background: #fff; border-bottom: 2px solid #8b8b8b; font-weight: 700; }

.side { position: relative; width: 39px; padding: 2px 0 0 8px; border-left: 1px solid #cfcdcb; display: flex; flex-direction: column; gap: 5px; flex: none; }
.grip { position: absolute; left: -1px; top: 268px; width: 5px; height: 50px; background: #8f908e; display: grid; place-items: center; }
.grip::after { content: ""; border: 2px solid transparent; border-left: 3px solid #fff; border-right: 0; }

.status { display: grid; grid-template-columns: 22px 156fr 222fr 204fr 169fr 44fr 31px 20px 20px 183fr 96px 33px; height: 18px; border-top: 1px solid #d3d1cf; font-size: 8px; line-height: 17px; flex: none; }
.status > span { padding-left: 5px; border-right: 1px solid #e4e2e0; white-space: nowrap; }
.status .ico { display: grid; place-items: center; padding: 0; }
.status .ico .ic { width: 14px; height: 14px; }
.status .mid { text-align: center; padding: 0; }
.status .r { border-right: 0; }
.status .zoom { display: flex; align-items: center; gap: 3px; padding-right: 2px; }
.zoom button { font-size: 12px; font-weight: 700; line-height: 14px; }
.zoom input { appearance: none; flex: 1; min-width: 0; height: 11px; background: linear-gradient(#9a9a9a, #9a9a9a) center / 100% 1px no-repeat; }
.zoom input::-webkit-slider-thumb { appearance: none; width: 3px; height: 7px; border: 1px solid #444; background: #fff; }
.status .pct { border-right: 0; }
```
